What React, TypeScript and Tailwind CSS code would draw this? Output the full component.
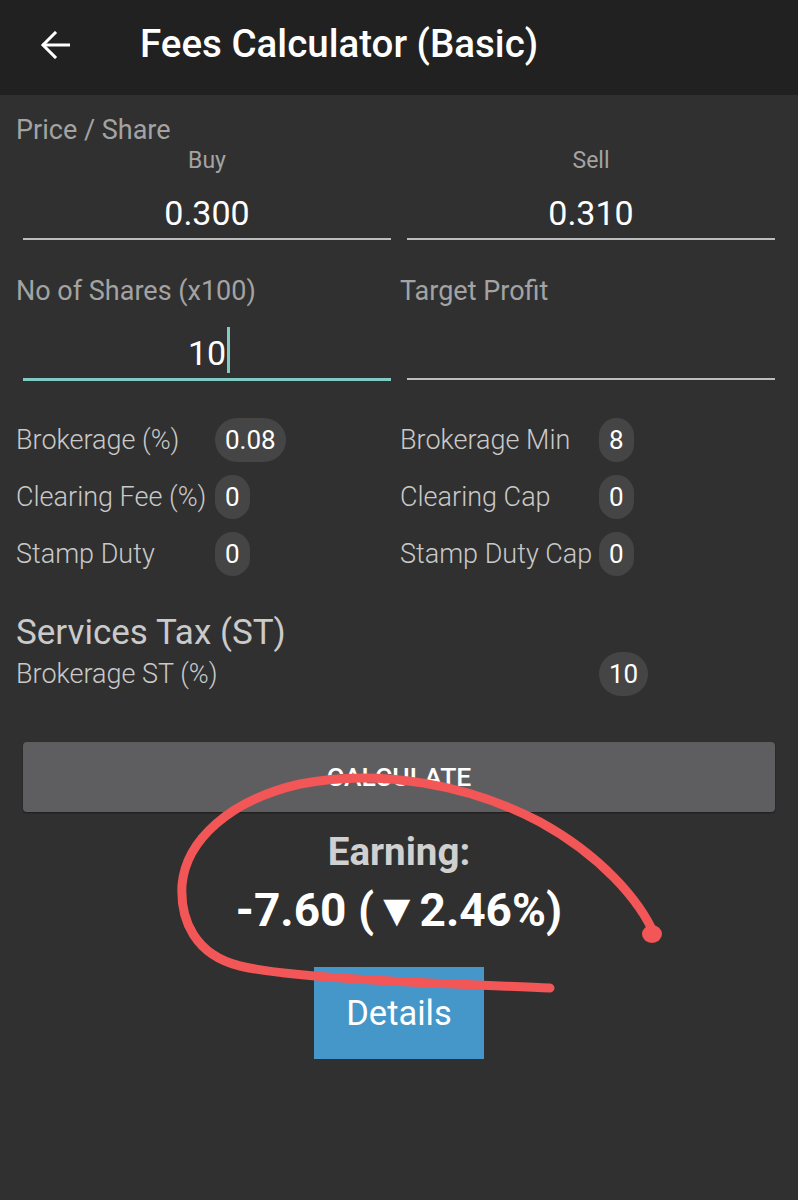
import React from 'react';

function Chip({ value }: { value: string }) {
  return (
    <span className="flex h-[44px] items-center rounded-full bg-[#454545] px-[10px] text-[26px] leading-none text-white">
      {value}
    </span>
  );
}

function FeeCell({ label, value }: { label: string; value?: string }) {
  return (
    <div className="flex items-center">
      <span className="w-[199px] shrink-0 whitespace-nowrap text-[27px] font-light leading-[30px] text-[#c9c9c9]">{label}</span>
      {value !== undefined && <Chip value={value} />}
    </div>
  );
}

export default function App() {
  const fees = [
    ['Brokerage (%)', '0.08', 'Brokerage Min', '8'],
    ['Clearing Fee (%)', '0', 'Clearing Cap', '0'],
    ['Stamp Duty', '0', 'Stamp Duty Cap', '0'],
  ];

  return (
    <div className="relative h-[1200px] w-[798px] overflow-hidden bg-[#303030] font-[Roboto,sans-serif]">
      <header className="flex h-[95px] items-center bg-[#212121] px-[40px] pb-[6px]">
        <svg width="30" height="28" viewBox="0 0 30 28" fill="none" stroke="white" strokeWidth="3" strokeLinecap="square">
          <path d="M4 14H29" />
          <path d="M15 2L3 14L15 26" strokeLinejoin="miter" />
        </svg>
        <h1 className="ml-[70px] text-[38.5px] font-medium leading-none text-white">Fees Calculator (Basic)</h1>
      </header>

      <div className="px-[16px] pt-[20px] text-[27px] leading-[30px] text-[#a3a3a3]">Price / Share</div>
      <div className="grid grid-cols-2 gap-x-[2px] px-[16px]">
        {[
          ['Buy', '0.300'],
          ['Sell', '0.310'],
        ].map(([l, v]) => (
          <div key={l} className="mx-[7px] text-center">
            <div className="mt-[3px] text-[23px] leading-[26px] text-[#a3a3a3]">{l}</div>
            <div className="border-b-2 border-[#bdbdbd] pt-[19px] pb-[5px] text-[34px] leading-[40px] text-white">{v}</div>
          </div>
        ))}
      </div>

      <div className="mt-[36px] grid grid-cols-2 gap-x-[2px] px-[16px]">
        <div>
          <div className="text-[27px] leading-[30px] text-[#a3a3a3]">No of Shares (x100)</div>
          <div className="mx-[7px] border-b-[3px] border-[#80cbc4] pt-[27px] pb-[5px] text-center text-[34px] leading-[40px] text-white">
            <span className="relative">
              10
              <span className="absolute left-full top-[-6px] ml-[1px] h-[46px] w-[3px] bg-[#80cbc4]" />
            </span>
          </div>
        </div>
        <div>
          <div className="text-[27px] leading-[30px] text-[#a3a3a3]">Target Profit</div>
          <div className="mx-[7px] h-[74px] border-b-2 border-[#bdbdbd]" />
        </div>
      </div>

      <div className="mt-[37px] flex flex-col gap-[13px]">
        {fees.map(([l1, v1, l2, v2]) => (
          <div key={l1} className="grid grid-cols-2 gap-x-[2px] px-[16px]">
            <FeeCell label={l1} value={v1} />
            <FeeCell label={l2} value={v2} />
          </div>
        ))}
      </div>

      <div className="mt-[39px] px-[16px] text-[35px] leading-[36px] text-[#cacaca]">Services Tax (ST)</div>
      <div className="mt-[1px] grid grid-cols-2 gap-x-[2px] px-[16px]">
        <FeeCell label="Brokerage ST (%)" />
        <FeeCell label="" value="10" />
      </div>

      <button className="mx-[23px] mt-[46px] flex h-[70px] w-[752px] items-center justify-center rounded-[4px] bg-[#5e5e60] text-[26.5px] font-medium leading-none text-white shadow-[0_1px_2px_rgba(0,0,0,0.4)]">
        CALCULATE
      </button>

      <div className="mt-[18px] text-center text-[38.5px] font-bold leading-[44px] text-[#d0d0d0]">Earning:</div>
      <div className="mt-[11px] text-center text-[46px] font-bold leading-[50px] text-white">-7.60 (▼2.46%)</div>

      <div className="mt-[32px] flex justify-center">
        <button className="flex h-[92px] w-[170px] items-center justify-center bg-[#4597c9] text-[34.5px] leading-none text-white">
          Details
        </button>
      </div>

      <svg className="pointer-events-none absolute left-0 top-0" width="798" height="1200" fill="none">
        <path
          d="M550 988 C 460 984, 300 980, 240 966 C 195 955, 180 920, 182 885 C 186 840, 230 800, 300 784 C 380 768, 470 785, 540 822 C 600 855, 640 900, 655 936"
          stroke="#f25656"
          strokeWidth="9"
          strokeLinecap="round"
        />
        <ellipse cx="652" cy="934" rx="10" ry="9" fill="#f25656" />
      </svg>
    </div>
  );
}
